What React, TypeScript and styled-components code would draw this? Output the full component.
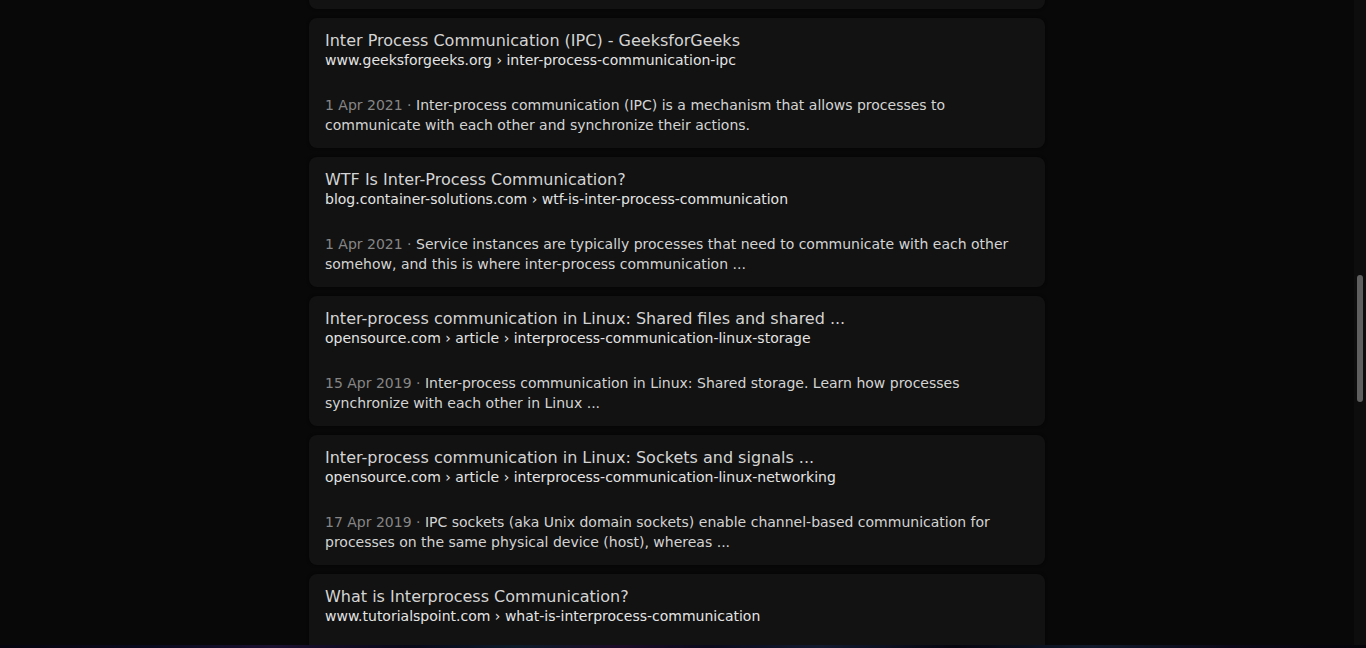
import React, { useLayoutEffect, useRef } from "react";
import styled, { createGlobalStyle } from "styled-components";

const Global = createGlobalStyle`
  html, body { margin: 0; padding: 0; background: #080808; overflow: hidden; }
  body { font-family: "DejaVu Sans", Verdana, sans-serif; }
`;

const Page = styled.div`
  display: flex;
  flex-direction: column;
  width: 1366px;
  height: 648px;
  background: #080808;
`;

const Body = styled.div`
  display: flex;
  height: 645px;
`;

const Main = styled.main`
  flex: 1;
  overflow: hidden;
`;

const List = styled.div`
  display: flex;
  flex-direction: column;
  align-items: center;
  gap: 9px;
  padding: 16px 0 40px;
`;

const Card = styled.article`
  box-sizing: border-box;
  width: 736px;
  height: 130px;
  padding: 13px 16px 13px;
  background: #121212;
  border-radius: 8px;
  box-shadow: 0 0 3px rgba(0, 0, 0, 0.6);
  display: flex;
  flex-direction: column;
`;

const Title = styled.div`
  font-size: 16px;
  line-height: 19px;
  color: #d4d4d4;
  white-space: nowrap;
`;

const Url = styled.div`
  font-size: 14px;
  line-height: 20px;
  color: #e4e4e4;
  white-space: nowrap;
`;

const Snippet = styled.p`
  margin: 25px 0 0;
  font-size: 14px;
  line-height: 20px;
  color: #d4d4d4;
`;

const DateText = styled.span`
  color: #868686;
`;

const Track = styled.div`
  width: 12px;
  background: #0d0d0e;
  display: flex;
  flex-direction: column;
  align-items: center;
`;

const Thumb = styled.div`
  width: 6px;
  border-radius: 3px;
  background: #5f5f5f;
`;

const Band = styled.div`
  height: 3px;
  background: linear-gradient(90deg, #05050f 0%, #0a0a20 12%, #1a1030 20%, #070818 30%, #0c1a2a 38%, #1a0c28 45%, #0a0a1c 52%, #121a30 60%, #05050f 70%, #101a2c 80%, #0a0818 90%, #04040a 100%);
`;

type Result = { title: string; url: string; date: string; text: string };

const results: Result[] = [
  {
    title: "Inter-process communication - Wikipedia",
    url: "en.wikipedia.org › wiki › Inter-process_communication",
    date: "",
    text: "In computer science, inter-process communication (IPC) is the sharing of data between running processes in a computer system.",
  },
  {
    title: "Inter Process Communication (IPC) - GeeksforGeeks",
    url: "www.geeksforgeeks.org › inter-process-communication-ipc",
    date: "1 Apr 2021",
    text: "Inter-process communication (IPC) is a mechanism that allows processes to communicate with each other and synchronize their actions.",
  },
  {
    title: "WTF Is Inter-Process Communication?",
    url: "blog.container-solutions.com › wtf-is-inter-process-communication",
    date: "1 Apr 2021",
    text: "Service instances are typically processes that need to communicate with each other somehow, and this is where inter-process communication ...",
  },
  {
    title: "Inter-process communication in Linux: Shared files and shared ...",
    url: "opensource.com › article › interprocess-communication-linux-storage",
    date: "15 Apr 2019",
    text: "Inter-process communication in Linux: Shared storage. Learn how processes synchronize with each other in Linux ...",
  },
  {
    title: "Inter-process communication in Linux: Sockets and signals ...",
    url: "opensource.com › article › interprocess-communication-linux-networking",
    date: "17 Apr 2019",
    text: "IPC sockets (aka Unix domain sockets) enable channel-based communication for processes on the same physical device (host), whereas ...",
  },
  {
    title: "What is Interprocess Communication?",
    url: "www.tutorialspoint.com › what-is-interprocess-communication",
    date: "",
    text: "Interprocess communication is the mechanism provided by the operating system that allows processes to communicate with each other.",
  },
];

export default function App() {
  const ref = useRef<HTMLElement>(null);
  useLayoutEffect(() => {
    if (ref.current) ref.current.scrollTop = 137;
  }, []);
  return (
    <Page>
      <Global />
      <Body>
        <Main ref={ref}>
          <List>
            {results.map((r) => (
              <Card key={r.url}>
                <Title>{r.title}</Title>
                <Url>{r.url}</Url>
                <Snippet>
                  {r.date && <DateText>{r.date} · </DateText>}
                  {r.text}
                </Snippet>
              </Card>
            ))}
          </List>
        </Main>
        <Track>
          <Thumb style={{ marginTop: 275, height: 127 }} />
        </Track>
      </Body>
      <Band />
    </Page>
  );
}
